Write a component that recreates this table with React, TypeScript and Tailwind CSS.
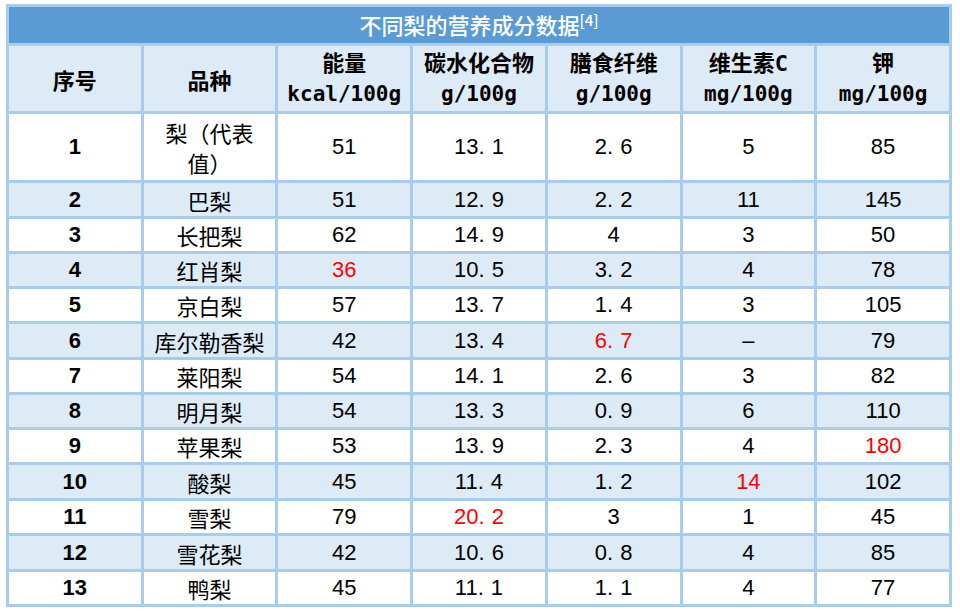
import React from "react";

type Row = {
  no: string;
  name: React.ReactNode;
  vals: string[];
  red?: number;
  h: string;
};

const rows: Row[] = [
  { no: "1", name: <>梨（代表<br />值）</>, vals: ["51", "13.1", "2.6", "5", "85"], h: "h-[69px]" },
  { no: "2", name: "巴梨", vals: ["51", "12.9", "2.2", "11", "145"], h: "h-[36px]" },
  { no: "3", name: "长把梨", vals: ["62", "14.9", "4", "3", "50"], h: "h-[35px]" },
  { no: "4", name: "红肖梨", vals: ["36", "10.5", "3.2", "4", "78"], red: 0, h: "h-[35px]" },
  { no: "5", name: "京白梨", vals: ["57", "13.7", "1.4", "3", "105"], h: "h-[35px]" },
  { no: "6", name: "库尔勒香梨", vals: ["42", "13.4", "6.7", "–", "79"], red: 2, h: "h-[36px]" },
  { no: "7", name: "莱阳梨", vals: ["54", "14.1", "2.6", "3", "82"], h: "h-[35px]" },
  { no: "8", name: "明月梨", vals: ["54", "13.3", "0.9", "6", "110"], h: "h-[35px]" },
  { no: "9", name: "苹果梨", vals: ["53", "13.9", "2.3", "4", "180"], red: 4, h: "h-[35px]" },
  { no: "10", name: "酸梨", vals: ["45", "11.4", "1.2", "14", "102"], red: 3, h: "h-[36px]" },
  { no: "11", name: "雪梨", vals: ["79", "20.2", "3", "1", "45"], red: 1, h: "h-[35px]" },
  { no: "12", name: "雪花梨", vals: ["42", "10.6", "0.8", "4", "85"], h: "h-[36px]" },
  { no: "13", name: "鸭梨", vals: ["45", "11.1", "1.1", "4", "77"], h: "h-[35px]" },
];

const headers: [string, string][] = [
  ["能量", "kcal/100g"],
  ["碳水化合物", "g/100g"],
  ["膳食纤维", "g/100g"],
  ["维生素C", "mg/100g"],
  ["钾", "mg/100g"],
];

function Num({ v }: { v: string }) {
  const [a, b] = v.split(".");
  if (b === undefined) return <>{v}</>;
  return (
    <>
      {a}.<span className="ml-[7px]">{b}</span>
    </>
  );
}

const cell = "border-[3px] border-[#a9cbec] p-0 text-center align-middle leading-[26px]";
const cjk = { fontFamily: '"Noto Sans CJK SC", sans-serif' };
const mono = { fontFamily: '"DejaVu Sans Mono", "Noto Sans CJK SC", monospace' };

export default function App() {
  return (
    <div className="h-[612px] w-[960px] bg-white pl-[6px] pt-[4px]">
      <table
        className="w-[946px] table-fixed border-collapse text-black"
        style={{ fontFamily: '"Liberation Sans", "Noto Sans CJK SC", sans-serif' }}
      >
        <tbody>
          <tr className="h-[39px] bg-[#5b9bd5]">
            <td colSpan={7} className={`${cell} text-[22px] font-medium text-white`}>
              <span style={cjk}>
                不同梨的营养成分数据<sup className="text-[15px] font-medium">[4]</sup>
              </span>
            </td>
          </tr>
          <tr className="h-[68px] bg-[#ddebf7] text-[22px] font-bold">
            <td className={cell} style={cjk}>序号</td>
            <td className={cell} style={cjk}>品种</td>
            {headers.map(([t, u]) => (
              <td key={t + u} className={cell}>
                <div className="leading-[31px]" style={mono}>
                  {t}
                </div>
                <div className="text-[21px] leading-[31px]" style={mono}>
                  {u}
                </div>
              </td>
            ))}
          </tr>
          {rows.map((r, i) => (
            <tr key={r.no} className={`${r.h} ${i % 2 === 1 ? "bg-[#ddebf7]" : "bg-white"}`}>
              <td className={`${cell} text-[22px] font-bold`}>{r.no}</td>
              <td className={`${cell} text-[22px]`} style={cjk}>
                <div className={r.no === "1" ? "leading-[30px]" : "leading-[26px]"}>{r.name}</div>
              </td>
              {r.vals.map((v, j) => (
                <td key={j} className={`${cell} text-[22px] ${r.red === j ? "text-[#ff0000]" : ""}`}>
                  <Num v={v} />
                </td>
              ))}
            </tr>
          ))}
        </tbody>
      </table>
    </div>
  );
}
